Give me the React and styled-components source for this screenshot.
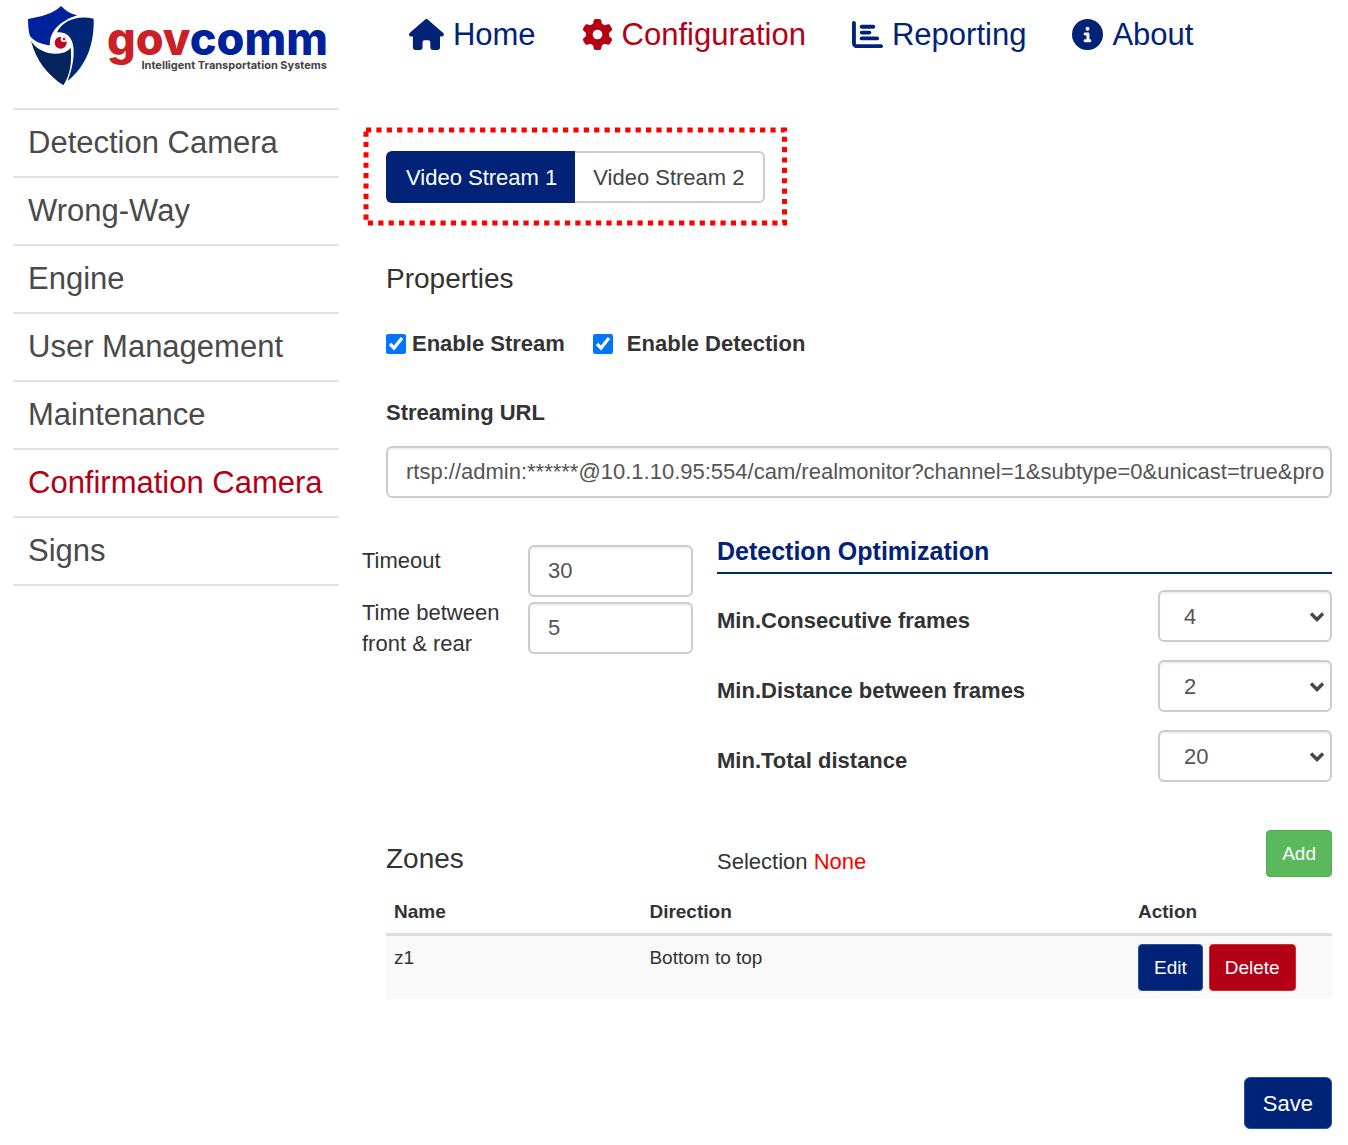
import React, { useState } from "react";
import styled, { createGlobalStyle } from "styled-components";
import { FaGear, FaChartBar, FaCircleInfo } from "react-icons/fa6";

function HouseIcon() {
  return (
    <svg viewBox="0 0 576 512" fill="currentColor" aria-hidden="true">
      <path d="M575.8 255.5c0 18-15 32.1-32 32.1h-32l.7 160.2c0 2.7-.2 5.4-.5 8.1V472c0 22.1-17.9 40-40 40H392c-22.1 0-40-17.9-40-40v-88c0-17.7-14.3-32-32-32h-64c-17.7 0-32 14.3-32 32v88c0 22.1-17.9 40-40 40h-80c-22.1 0-40-17.9-40-40V360c0-.9 0-1.9.1-2.8v-69.6H32c-18 0-32-14-32-32.1 0-9 3-17 10-24L266.4 8c7-7 15-8 22-8s15 2 21 7l255.4 224.5c8 7 12 15 11 24z" />
    </svg>
  );
}

const navLinks = [
  { label: "Home", icon: HouseIcon },
  { label: "Configuration", icon: FaGear, active: true },
  { label: "Reporting", icon: FaChartBar },
  { label: "About", icon: FaCircleInfo },
];

const sideLinks = [
  "Detection Camera",
  "Wrong-Way",
  "Engine",
  "User Management",
  "Maintenance",
  "Confirmation Camera",
  "Signs",
];

const optimizations = [
  { id: "frames", label: "Min.Consecutive frames", value: "4", options: ["2", "4", "6"] },
  { id: "distance", label: "Min.Distance between frames", value: "2", options: ["1", "2", "3"] },
  { id: "total", label: "Min.Total distance", value: "20", options: ["10", "20", "30"] },
];

const zones = [{ name: "z1", direction: "Bottom to top" }];

function Logo() {
  return (
    <Brand href="#">
      <svg width="68" height="81" viewBox="50 15 204 243" aria-hidden="true">
        <path
          fill="#00219c"
          d="M152 18C128 42 92 50 53 57c0 20 2 38 6 52 16 17 36 25 60 27-3-36 24-71 82-90-20-4-35-14-49-28z"
        />
        <path
          fill="#002677"
          d="M250 56c-46-11-93 4-110 41 33-4 52 22 50 62-1 32-8 56-18 84 54-44 80-107 78-187z"
        />
        <path
          fill="#05245b"
          d="M62 122c17 31 62 46 96 36 10-3 17-8 23-15 4 43-1 81-22 113-48-33-82-74-97-134z"
        />
        <circle cx="151" cy="127" r="29" fill="#fff" />
        <circle cx="151" cy="128" r="18" fill="#bd0a22" />
        <path fill="#fff" d="M155 108c-7 8-4 17 3 18 7 0 11-3 13-7l-4-9z" />
        <circle cx="161" cy="117" r="4" fill="#bd0a22" />
      </svg>
      <BrandText>
        <Wordmark>
          <span>gov</span>comm
        </Wordmark>
        <Tagline>Intelligent Transportation Systems</Tagline>
      </BrandText>
    </Brand>
  );
}

function App() {
  const [stream, setStream] = useState(1);
  const [url, setUrl] = useState(
    "rtsp://admin:******@10.1.10.95:554/cam/realmonitor?channel=1&subtype=0&unicast=true&pro"
  );

  return (
    <Page>
      <GlobalStyle />
      <Header>
        <Logo />
        <Nav>
          {navLinks.map(({ label, icon: Icon, active }) => (
            <NavLink key={label} href="#" $active={active}>
              <Icon />
              {label}
            </NavLink>
          ))}
        </Nav>
      </Header>

      <Body>
        <Sidebar>
          {sideLinks.map((label) => (
            <SideLink key={label} href="#" $active={label === "Confirmation Camera"}>
              {label}
            </SideLink>
          ))}
        </Sidebar>

        <Main>
          <StreamTabs>
            <Tab type="button" $active={stream === 1} onClick={() => setStream(1)}>
              Video Stream 1
            </Tab>
            <Tab type="button" $active={stream === 2} onClick={() => setStream(2)}>
              Video Stream 2
            </Tab>
            <Highlight aria-hidden="true">
              <rect width="100%" height="100%" />
            </Highlight>
          </StreamTabs>

          <PropertiesTitle>Properties</PropertiesTitle>
          <Checks>
            <CheckLabel $gap="6px">
              <input type="checkbox" defaultChecked />
              Enable Stream
            </CheckLabel>
            <CheckLabel $gap="14px">
              <input type="checkbox" defaultChecked />
              Enable Detection
            </CheckLabel>
          </Checks>

          <BoldLabel htmlFor="url">Streaming URL</BoldLabel>
          <UrlInput id="url" type="text" value={url} onChange={(e) => setUrl(e.target.value)} />

          <Settings>
            <Timers>
              <label htmlFor="timeout">Timeout</label>
              <Input id="timeout" type="text" defaultValue="30" />
              <label htmlFor="between">Time between front &amp; rear</label>
              <Input id="between" type="text" defaultValue="5" />
            </Timers>
            <Optimization>
              <h3>Detection Optimization</h3>
              {optimizations.map((item) => (
                <OptionRow key={item.id}>
                  <label htmlFor={item.id}>{item.label}</label>
                  <SelectBox>
                    <select id={item.id} defaultValue={item.value}>
                      {item.options.map((option) => (
                        <option key={option}>{option}</option>
                      ))}
                    </select>
                    <svg width="16" height="12" viewBox="0 0 16 12" aria-hidden="true">
                      <path d="M2 2.5l6 6 6-6" />
                    </svg>
                  </SelectBox>
                </OptionRow>
              ))}
            </Optimization>
          </Settings>

          <ZonesHeader>
            <SectionTitle>Zones</SectionTitle>
            <Selection>
              Selection <span>None</span>
            </Selection>
            <SmallButton type="button" $color="#5cb85c" $border="#4cae4c">
              Add
            </SmallButton>
          </ZonesHeader>
          <ZonesTable>
            <thead>
              <tr>
                <th>Name</th>
                <th>Direction</th>
                <th>Action</th>
              </tr>
            </thead>
            <tbody>
              {zones.map((zone) => (
                <tr key={zone.name}>
                  <td>{zone.name}</td>
                  <td>{zone.direction}</td>
                  <td>
                    <Actions>
                      <SmallButton type="button" $color="#002277" $border="#20549a">
                        Edit
                      </SmallButton>
                      <SmallButton type="button" $color="#b40014" $border="#cf2f35">
                        Delete
                      </SmallButton>
                    </Actions>
                  </td>
                </tr>
              ))}
            </tbody>
          </ZonesTable>

          <SaveButton type="button">Save</SaveButton>
        </Main>
      </Body>
    </Page>
  );
}

const GlobalStyle = createGlobalStyle`
  * {
    box-sizing: border-box;
  }

  body {
    margin: 0;
    background: #fff;
    color: #333;
    font-family: "Liberation Sans", Arial, sans-serif;
    font-size: 22px;
    line-height: 31px;
  }

  button, input, select {
    font: inherit;
  }

  a {
    text-decoration: none;
  }
`;

const Page = styled.div`
  padding: 0 16px 16px 13px;
`;

const Header = styled.header`
  display: flex;
  height: 108px;
`;

const Brand = styled.a`
  display: flex;
  gap: 12px;
  width: 396px;
  padding: 5px 0 0 14px;
`;

const BrandText = styled.div`
  width: 220px;
`;

const Wordmark = styled.div`
  color: #00219c;
  font-family: Inter, sans-serif;
  font-size: 45px;
  font-weight: 800;
  line-height: 68px;
  white-space: nowrap;

  span {
    color: #cb2026;
  }
`;

const Tagline = styled.div`
  margin-top: -14px;
  color: #444;
  font-family: Inter, sans-serif;
  font-size: 11px;
  font-weight: 700;
  line-height: 12px;
  text-align: right;
  white-space: nowrap;
`;

const Nav = styled.nav`
  display: flex;
  align-items: flex-start;
  gap: 46px;
  padding-top: 17px;
`;

const NavLink = styled.a`
  display: flex;
  align-items: center;
  gap: 9px;
  color: ${(props) => (props.$active ? "#b40014" : "#002277")};
  font-size: 31px;
  line-height: 36px;

  svg {
    width: auto;
    height: 31px;
    margin-bottom: 2px;
  }
`;

const Body = styled.div`
  display: flex;
  gap: 47px;
`;

const Sidebar = styled.nav`
  flex: 0 0 326px;
  border-top: 2px solid #e2e2e2;
  align-self: flex-start;
`;

const SideLink = styled.a`
  display: block;
  padding: 15px;
  border-bottom: 2px solid #e2e2e2;
  color: ${(props) => (props.$active ? "#b40014" : "#4a4a4a")};
  font-size: 31px;
  line-height: 36px;
`;

const Main = styled.main`
  display: flex;
  flex: 1;
  flex-direction: column;
  min-width: 0;
  padding-top: 43px;
`;

const StreamTabs = styled.div`
  position: relative;
  display: flex;
  align-self: flex-start;
`;

const Tab = styled.button`
  height: 52px;
  padding: 0 18px;
  border: 2px solid ${(props) => (props.$active ? "#002277" : "#ccc")};
  background: ${(props) => (props.$active ? "#002277" : "#fff")};
  color: ${(props) => (props.$active ? "#fff" : "#444")};

  &:first-child {
    border-right: 0;
    border-radius: 6px 0 0 6px;
  }

  &:nth-child(2) {
    border-left: 0;
    border-radius: 0 6px 6px 0;
  }
`;

/* square dotted outline around the tabs */
const Highlight = styled.svg`
  position: absolute;
  top: -21px;
  left: -20px;
  width: calc(100% + 40px);
  height: calc(100% + 41px);
  overflow: visible;
  pointer-events: none;

  rect {
    fill: none;
    stroke: #f00;
    stroke-width: 5;
    stroke-dasharray: 5.2 5.17;
  }
`;

const SectionTitle = styled.h2`
  margin: 0;
  font-size: 28px;
  font-weight: normal;
  line-height: 36px;
`;

const PropertiesTitle = styled(SectionTitle)`
  margin: 58px 0 31px;
`;

const Checks = styled.div`
  display: flex;
  gap: 28px;
  margin-bottom: 38px;
`;

const CheckLabel = styled.label`
  display: flex;
  align-items: center;
  gap: ${(props) => props.$gap};
  font-weight: bold;

  input {
    width: 20px;
    height: 20px;
    margin: 0;
    accent-color: #0075ff;
  }
`;

const BoldLabel = styled.label`
  margin-bottom: 18px;
  font-weight: bold;
`;

const Input = styled.input`
  width: 100%;
  height: 52px;
  padding: 0 18px;
  border: 2px solid #ccc;
  border-radius: 6px;
  background: #fff;
  box-shadow: inset 0 2px 2px rgba(0, 0, 0, 0.06);
  color: #555;
`;

const UrlInput = styled(Input)`
  margin-bottom: 38px;
  padding-right: 4px;
`;

const Settings = styled.div`
  display: flex;
  gap: 24px;
  margin: 0 0 48px -24px;
`;

const Timers = styled.div`
  display: grid;
  grid-template-columns: 142px 165px;
  align-content: start;
  column-gap: 24px;
  row-gap: 5px;
  padding-top: 9px;

  label:nth-of-type(2) {
    margin-top: -5px;
  }
`;

const Optimization = styled.section`
  display: flex;
  flex: 1;
  flex-direction: column;
  gap: 18px;

  h3 {
    margin: 0 0 -2px;
    padding-bottom: 6px;
    border-bottom: 2px solid #002277;
    color: #002277;
    font-size: 25px;
    line-height: 30px;
  }
`;

const OptionRow = styled.div`
  display: flex;
  justify-content: space-between;

  label {
    padding-top: 15px;
    font-weight: bold;
  }
`;

const SelectBox = styled.div`
  position: relative;
  width: 174px;

  select {
    display: block;
    width: 100%;
    height: 52px;
    padding: 0 24px;
    border: 2px solid #ccc;
    border-radius: 6px;
    background: #fff;
    box-shadow: inset 0 2px 2px rgba(0, 0, 0, 0.06);
    color: #555;
    appearance: none;
  }

  svg {
    position: absolute;
    top: 21px;
    right: 7px;
    pointer-events: none;
  }

  path {
    fill: none;
    stroke: #484848;
    stroke-width: 3.4;
  }
`;

const ZonesHeader = styled.div`
  display: grid;
  grid-template-columns: 307px 1fr auto;
  align-items: end;
  column-gap: 24px;
  margin-bottom: 13px;
`;

const Selection = styled.div`
  span {
    color: #f00;
  }
`;

const SmallButton = styled.button`
  height: 47px;
  padding: 0 15px;
  border: 1px solid ${(props) => props.$border};
  border-radius: 4px;
  background: ${(props) => props.$color};
  color: #fff;
  font-size: 19px;
`;

const ZonesTable = styled.table`
  width: 100%;
  border-collapse: collapse;
  table-layout: fixed;
  font-size: 19px;
  line-height: 27px;
  text-align: left;

  th,
  td {
    padding: 8px;
    vertical-align: top;
  }

  th {
    border-bottom: 3px solid #ddd;
  }

  th:first-child {
    width: 27%;
  }

  th:last-child {
    width: 202px;
  }

  td {
    background: #f9f9f9;
  }
`;

const Actions = styled.div`
  display: flex;
  gap: 6px;
`;

const SaveButton = styled.button`
  align-self: flex-end;
  height: 52px;
  margin-top: 78px;
  padding: 0 18px;
  border: 1px solid #20549a;
  border-radius: 6px;
  background: #002277;
  color: #fff;
`;

export default App;
